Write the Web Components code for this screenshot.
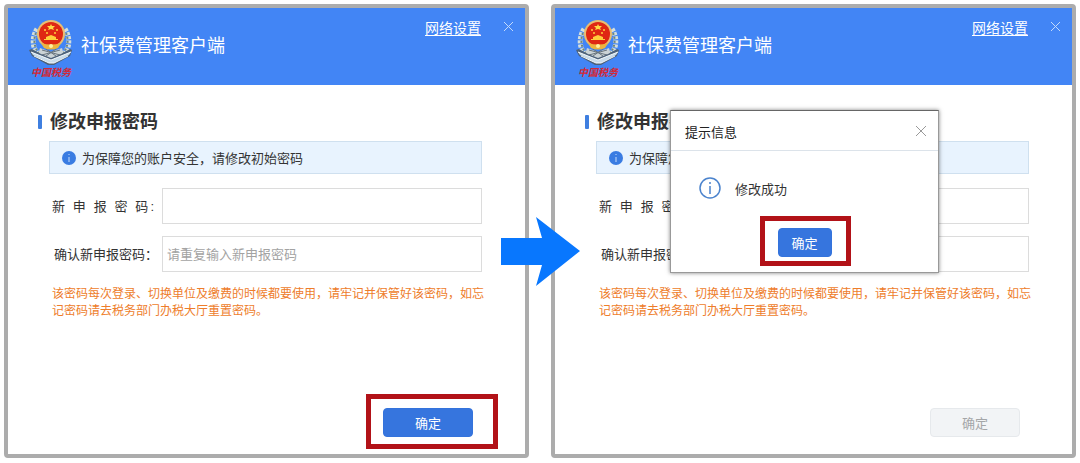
<!DOCTYPE html>
<html lang="zh-CN">
<head>
<meta charset="utf-8">
<title>社保费管理客户端</title>
<style>
    * { box-sizing: border-box; }
    body {
        margin: 0;
        background: #fff;
        color: #333;
        font-family: "Liberation Sans", "Noto Sans CJK SC", sans-serif;
        font-size: 13px;
    }
</style>
</head>
<body>
<step-board>
    <client-window>
        <password-form></password-form>
        <action-button slot="footer" marked>确定</action-button>
    </client-window>
    <client-window>
        <password-form></password-form>
        <action-button slot="footer" disabled>确定</action-button>
        <message-box slot="dialog" heading="提示信息">
            修改成功
            <action-button slot="actions" marked small>确定</action-button>
        </message-box>
    </client-window>
</step-board>

<script>
// Two windows side by side with an arrow between them
class StepBoard extends HTMLElement {
    constructor() {
        super();
        this.attachShadow({ mode: 'open' });
    }

    connectedCallback() {
        this.shadowRoot.innerHTML = `
            <style>
                :host {
                    display: grid;
                    grid-template-columns: 1fr 1fr;
                    gap: 22px;
                    position: relative;
                    box-sizing: border-box;
                    min-height: 100vh;
                    padding: 4px 4px 5px;
                }
                .arrow {
                    position: absolute;
                    left: 50%;
                    top: 216px;
                    margin-left: -39px;
                    width: 80px;
                    height: 71px;
                }
            </style>
            <slot></slot>
            <svg class="arrow" viewBox="0 0 80 71" aria-hidden="true">
                <path d="M0 22H41L35 1L79 35L35 70L41 49H0Z" fill="#0877fe"/>
            </svg>
        `;
    }
}

class TaxLogo extends HTMLElement {
    constructor() {
        super();
        this.attachShadow({ mode: 'open' });
    }

    connectedCallback() {
        this.shadowRoot.innerHTML = `
            <style>
                :host { display: block; width: 44px; height: 60px; }
                svg { display: block; }
            </style>
            <svg width="44" height="60" viewBox="0 0 44 60" aria-hidden="true">
                <!-- wreath -->
                <path d="M8 10C2 19 3 32 12 37M36 10C42 19 41 32 32 37" fill="none" stroke="#d5dfdc" stroke-width="5" stroke-dasharray="3 1"/>
                <path d="M7 14C4 21 5 30 12 36M37 14C40 21 39 30 32 36" fill="none" stroke="#6d8580" stroke-width="2" stroke-dasharray="2 2"/>
                <path d="M11 29L22 33L33 29L35 36L22 41L9 36Z" fill="#cbd3d6"/>
                <path d="M13 31L31 36M31 31L13 36M17 30L27 37M27 30L17 37" stroke="#68747d" stroke-width="1"/>
                <!-- open book -->
                <path d="M0 31L3 30L12 35L22 39L32 35L41 30L43 31L41 37L25 46H19L3 37Z" fill="#4d627a"/>
                <path d="M2 33L12 37L22 41L32 37L42 33L40 36L25 44L20 44L4 36Z" fill="#c9dcea"/>
                <path d="M2 33L12 37L22 41L32 37L42 33M5 37L20 44H25L39 37" fill="none" stroke="#f4f8fa" stroke-width="1"/>
                <!-- red disc -->
                <circle cx="22" cy="15" r="14" fill="#e9bd72"/>
                <circle cx="22" cy="15" r="12" fill="#df2713"/>
                <path d="M22 5L23 7H26L24 9L25 11L22 10L19 11L20 9L18 7H21Z" fill="#ffda45"/>
                <g fill="#ffcf3c">
                    <circle cx="16" cy="11" r="1"/>
                    <circle cx="18" cy="14" r="1"/>
                    <circle cx="26" cy="14" r="1"/>
                    <circle cx="28" cy="11" r="1"/>
                    <path d="M17 18L22 16L27 18V20H29V21H15V20H17Z"/>
                </g>
                <path d="M12 24Q22 27 32 24L29 29Q22 32 15 29Z" fill="#edb43e"/>
                <circle cx="22" cy="27" r="2" fill="#fff0a0"/>
                <text x="2" y="57" font-size="10" font-style="italic" font-weight="700" fill="#d32836">中国税务</text>
            </svg>
        `;
    }
}

// Window frame: blue title bar, slotted body, footer and dialog
class ClientWindow extends HTMLElement {
    constructor() {
        super();
        this.attachShadow({ mode: 'open' });
    }

    connectedCallback() {
        this.shadowRoot.innerHTML = `
            <style>
                :host {
                    display: flex;
                    flex-direction: column;
                    position: relative;
                    box-sizing: border-box;
                    min-width: 0;
                    border: 4px solid #acacac;
                    border-radius: 4px;
                    background: #fff;
                }
                header {
                    display: flex;
                    align-items: flex-start;
                    box-sizing: border-box;
                    height: 77px;
                    padding: 11px 11px 0 21px;
                    background: #4285f5;
                    color: #fff;
                }
                h1 {
                    flex: 1;
                    margin: 14px 0 0 8px;
                    font-size: 18px;
                    line-height: 26px;
                    font-weight: 400;
                }
                a {
                    color: #fff;
                    font-size: 14px;
                    line-height: 18px;
                    text-underline-offset: 2px;
                }
                button {
                    margin: 2px 0 0 22px;
                    padding: 0;
                    border: 0;
                    background: none;
                    line-height: 0;
                }
                main { flex: 1; }
                footer {
                    display: flex;
                    justify-content: flex-end;
                    padding: 0 52px 17px;
                }
            </style>
            <header>
                <tax-logo></tax-logo>
                <h1>社保费管理客户端</h1>
                <a href="#">网络设置</a>
                <button type="button" aria-label="关闭">
                    <svg width="11" height="11" viewBox="0 0 11 11"><path d="M1 1L10 10M10 1L1 10" stroke="#c3dafb" stroke-width="1"/></svg>
                </button>
            </header>
            <main><slot></slot></main>
            <footer><slot name="footer"></slot></footer>
            <slot name="dialog"></slot>
        `;
    }
}

class PasswordForm extends HTMLElement {
    constructor() {
        super();
        this.attachShadow({ mode: 'open' });
    }

    connectedCallback() {
        this.shadowRoot.innerHTML = `
            <style>
                :host { display: block; padding: 24px 43px 0 30px; }
                h2 {
                    display: flex;
                    align-items: center;
                    gap: 8px;
                    margin: 0;
                    font-size: 18px;
                    line-height: 26px;
                    font-weight: 700;
                }
                h2::before {
                    content: "";
                    width: 4px;
                    height: 14px;
                    border-radius: 1px;
                    background: #3f7fe0;
                }
                .notice {
                    display: flex;
                    align-items: center;
                    gap: 6px;
                    box-sizing: border-box;
                    height: 33px;
                    margin: 6px 0 14px 11px;
                    padding-left: 12px;
                    border: 1px solid #cfe0ef;
                    background: #e8f3fe;
                }
                .hint {
                    margin: 14px -6px 0 14px;
                    color: #ee7d2b;
                    font-size: 12px;
                    line-height: 17px;
                }
            </style>
            <h2>修改申报密码</h2>
            <div class="notice">
                <svg width="14" height="14" viewBox="0 0 14 14" aria-hidden="true">
                    <circle cx="7" cy="7" r="7" fill="#3a7ce2"/>
                    <path d="M7 3V4M7 6V11" stroke="#c6dcfa" stroke-width="1"/>
                </svg>
                <span>为保障您的账户安全，请修改初始密码</span>
            </div>
            <form-row label="新 申 报 密 码:" spread></form-row>
            <form-row label="确认新申报密码：" placeholder="请重复输入新申报密码"></form-row>
            <p class="hint">该密码每次登录、切换单位及缴费的时候都要使用，请牢记并保管好该密码，如忘记密码请去税务部门办税大厅重置密码。</p>
        `;
    }
}

class FormRow extends HTMLElement {
    constructor() {
        super();
        this.attachShadow({ mode: 'open' });
    }

    connectedCallback() {
        this.shadowRoot.innerHTML = `
            <style>
                :host {
                    display: flex;
                    align-items: center;
                    margin: 0 0 12px 14px;
                }
                label {
                    box-sizing: border-box;
                    flex: none;
                    width: 110px;
                    padding: 0 0 2px 2px;
                    white-space: nowrap;
                }
                /* characters spread over the label column */
                :host([spread]) label {
                    padding: 0 8px 2px 0;
                    white-space: normal;
                    text-align-last: justify;
                }
                input {
                    flex: 1;
                    min-width: 0;
                    box-sizing: border-box;
                    height: 36px;
                    padding: 0 4px;
                    border: 1px solid #dcdcdc;
                    background: #fff;
                    color: #333;
                    font: inherit;
                    outline: none;
                }
                input::placeholder { color: #a3a3a3; }
            </style>
            <label for="field"></label>
            <input id="field" type="password">
        `;
        this.shadowRoot.querySelector('label').textContent = this.getAttribute('label');
        this.shadowRoot.querySelector('input').placeholder = this.getAttribute('placeholder') || '';
    }
}

// Button with an optional red highlight frame
class ActionButton extends HTMLElement {
    constructor() {
        super();
        this.attachShadow({ mode: 'open' });
    }

    connectedCallback() {
        this.shadowRoot.innerHTML = `
            <style>
                :host { display: block; position: relative; }
                button {
                    display: block;
                    width: 90px;
                    height: 29px;
                    padding: 0;
                    border: 1px solid #3473dc;
                    border-radius: 4px;
                    background: #3675de;
                    color: #fff;
                    font: inherit;
                }
                button:disabled {
                    border-color: #e6e9ec;
                    background: #f2f4f6;
                    color: #a4a6a8;
                }
                :host([small]) button { width: 54px; }
                :host([marked])::after {
                    content: "";
                    position: absolute;
                    inset: -14px -25px -12px -17px;
                    border: 5px solid #b21218;
                    pointer-events: none;
                }
                :host([marked][small])::after { inset: -12px -19px -9px -18px; }
            </style>
            <button type="button"><slot></slot></button>
        `;
        this.shadowRoot.querySelector('button').disabled = this.hasAttribute('disabled');
    }
}

class MessageBox extends HTMLElement {
    constructor() {
        super();
        this.attachShadow({ mode: 'open' });
    }

    connectedCallback() {
        this.shadowRoot.innerHTML = `
            <style>
                :host {
                    position: absolute;
                    left: 115px;
                    top: 102px;
                    width: 269px;
                    box-sizing: border-box;
                    border: 1px solid #999;
                    border-top-color: #666;
                    background: #fff;
                    box-shadow: 0 0 4px rgba(0, 0, 0, .5);
                }
                header {
                    display: flex;
                    align-items: center;
                    justify-content: space-between;
                    box-sizing: border-box;
                    height: 40px;
                    padding: 2px 11px 0 14px;
                    border-bottom: 1px solid #dce3ea;
                }
                h3 { margin: 0; font-size: 13px; font-weight: 400; color: #222; }
                header button {
                    margin-bottom: 2px;
                    padding: 0;
                    border: 0;
                    background: none;
                    line-height: 0;
                }
                .body {
                    display: flex;
                    align-items: center;
                    gap: 14px;
                    padding: 26px 28px 0;
                }
                .actions {
                    display: flex;
                    justify-content: center;
                    padding: 29px 0 15px;
                }
            </style>
            <header>
                <h3></h3>
                <button type="button" aria-label="关闭">
                    <svg width="12" height="12" viewBox="0 0 12 12"><path d="M1 1L11 11M11 1L1 11" stroke="#999" stroke-width="1"/></svg>
                </button>
            </header>
            <div class="body">
                <svg width="22" height="22" viewBox="0 0 22 22" aria-hidden="true">
                    <circle cx="11" cy="11" r="10" fill="none" stroke="#4b83cd" stroke-width="1.5"/>
                    <path d="M11 5V7M11 9V17" stroke="#4b83cd" stroke-width="1.5"/>
                </svg>
                <span><slot></slot></span>
            </div>
            <div class="actions"><slot name="actions"></slot></div>
        `;
        this.shadowRoot.querySelector('h3').textContent = this.getAttribute('heading');
    }
}

customElements.define('step-board', StepBoard);
customElements.define('tax-logo', TaxLogo);
customElements.define('client-window', ClientWindow);
customElements.define('form-row', FormRow);
customElements.define('password-form', PasswordForm);
customElements.define('action-button', ActionButton);
customElements.define('message-box', MessageBox);
</script>
</body>
</html>
